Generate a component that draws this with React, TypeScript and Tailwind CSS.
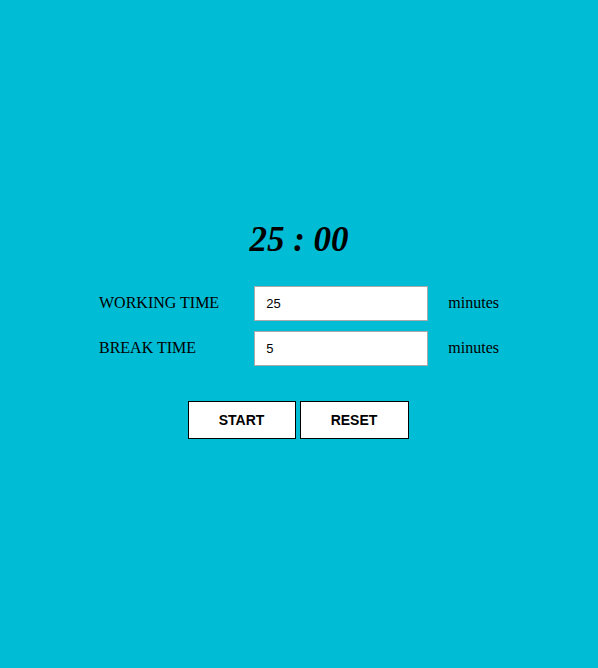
import React, { useState } from 'react';

const Row = ({ label, value, onChange }: { label: string; value: string; onChange: (v: string) => void }) => (
  <div className="flex items-center h-[35px] font-['Liberation_Serif',serif] text-[16px] text-black">
    <span className="w-[156px] -mt-[2px]">{label}</span>
    <input
      value={value}
      onChange={(e) => onChange(e.target.value)}
      className="w-[174px] h-[35px] bg-white border border-[#a9a9a9] px-[11px] font-['Liberation_Sans',sans-serif] text-[13px] text-black outline-none"
    />
    <span className="ml-[20px] -mt-[2px]">minutes</span>
  </div>
);

const App = () => {
  const [work, setWork] = useState('25');
  const [brk, setBrk] = useState('5');

  return (
    <div className="w-full h-[668px] bg-[#00bcd4] flex flex-col items-center pt-[218px]">
      <h1 className="font-['Liberation_Serif',serif] text-[35px] font-bold italic text-black leading-[44px]">
        25 : 00
      </h1>
      <div className="flex flex-col gap-[10px] mt-[24px] w-[400px]">
        <Row label="WORKING TIME" value={work} onChange={setWork} />
        <Row label="BREAK TIME" value={brk} onChange={setBrk} />
      </div>
      <div className="flex gap-[4px] mt-[35px] mr-[2px] font-['Liberation_Sans',sans-serif] text-[14px] font-bold text-black">
        <button className="w-[108px] h-[38px] bg-white border border-black">START</button>
        <button className="w-[109px] h-[38px] bg-white border border-black">RESET</button>
      </div>
    </div>
  );
};

export default App;
